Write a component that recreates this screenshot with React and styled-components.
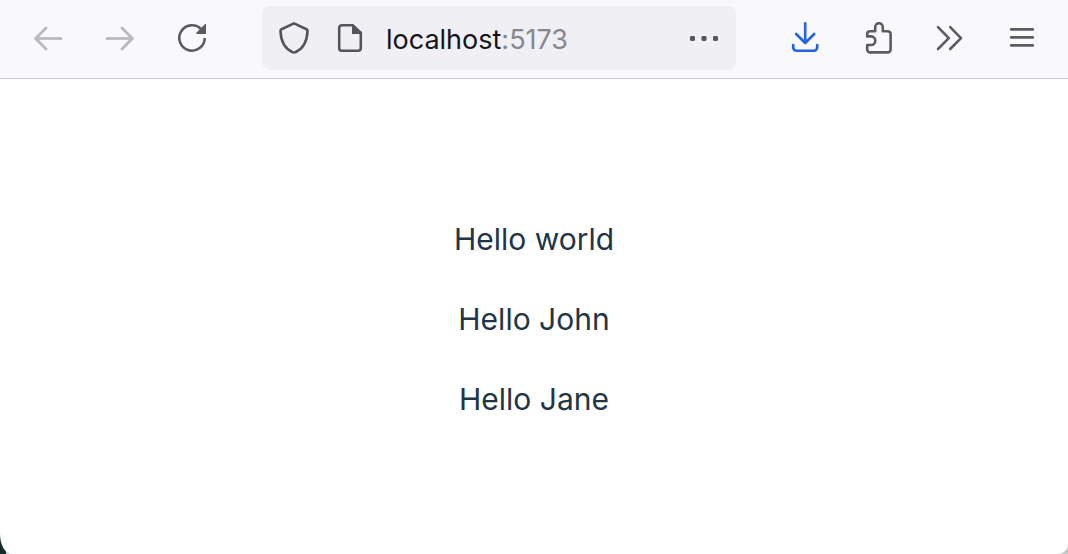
import React from "react";
import styled, { createGlobalStyle } from "styled-components";

const GlobalStyle = createGlobalStyle`
  * { box-sizing: border-box; }
  body {
    margin: 0;
    background: linear-gradient(to right, #14292c 6px, #c6c9c9 6px);
    font-family: Inter, "Liberation Sans", sans-serif;
  }
`;

const BrowserWindow = styled.div`
  display: flex;
  flex-direction: column;
  min-height: 100vh;
  overflow: hidden;
  background: #fff;
  border-radius: 0 0 10px 12px / 0 0 10px 20px;
`;

const Toolbar = styled.header`
  display: flex;
  align-items: center;
  gap: 34px;
  padding: 6px 10px 8px 12px;
  background: #f9f9fb;
  border-bottom: 1px solid #cccccf;
`;

const ButtonGroup = styled.div`
  display: flex;
  flex: none;
`;

const ToolButton = styled.button`
  display: flex;
  align-items: center;
  justify-content: center;
  width: 72px;
  height: 64px;
  padding: 0;
  border: 0;
  background: none;
  color: ${({ $tone }) => $tone || "#5b5b66"};
`;

const AddressBar = styled.div`
  display: flex;
  flex: 1;
  align-items: center;
  min-width: 0;
  height: 64px;
  padding: 0 4px;
  border-radius: 8px;
  background: #f0f0f4;
`;

const AddressButton = styled(ToolButton)`
  flex: none;
  width: 56px;
  color: #55545b;
`;

const Address = styled.div`
  flex: 1;
  min-width: 0;
  padding: 4px 0 0 8px;
  overflow: hidden;
  white-space: nowrap;
  font-size: 27px;
  line-height: 40px;
  color: #15141a;
`;

const Port = styled.span`
  color: #87878c;
`;

const Glyph = styled.svg`
  display: block;
  width: 32px;
  height: 32px;
  fill: none;
  stroke: currentColor;
  stroke-width: ${({ $weight }) => $weight || 2.6};
  stroke-linecap: round;
  stroke-linejoin: round;
`;

const Page = styled.main`
  flex: 1;
  padding: 136px 24px 32px;
`;

const Greeting = styled.p`
  margin: 0 0 32px;
  text-align: center;
  font-size: 30px;
  line-height: 48px;
  color: #213547;
`;

const Icon = ({ weight, children }) => (
  <Glyph viewBox="0 0 32 32" $weight={weight} aria-hidden="true">
    {children}
  </Glyph>
);

const names = ["world", "John", "Jane"];

export default function App() {
  return (
    <>
      <GlobalStyle />
      <BrowserWindow>
        <Toolbar>
          <ButtonGroup>
            <ToolButton $tone="#bababc" aria-label="Back" disabled>
              <Icon weight={2.8}>
                <path strokeLinecap="butt" d="M3.5 16.5H30" />
                <path d="M14 6 3.6 16.5 14 27" />
              </Icon>
            </ToolButton>
            <ToolButton $tone="#bababc" aria-label="Forward" disabled>
              <Icon weight={2.8}>
                <path strokeLinecap="butt" d="M2 16.5H28.5" />
                <path d="M18 6 28.4 16.5 18 27" />
              </Icon>
            </ToolButton>
            <ToolButton aria-label="Reload">
              <Icon>
                <path strokeLinecap="butt" d="M28.7 16A12.7 12.7 0 1 1 25 7" />
                <path stroke="none" fill="currentColor" d="M30 2v10H21q-1.5-.5-.5-1.6l8.3-8.2q.6-.6 1.2-.2z" />
              </Icon>
            </ToolButton>
          </ButtonGroup>

          <AddressBar>
            <AddressButton aria-label="Tracking protection">
              <Icon>
                <path d="M16 1.4 3.5 7.2Q2.4 7.8 2.5 9.2C2.9 18.5 6.4 26.5 14.6 30.2Q16 30.9 17.4 30.2C25.6 26.5 29.1 18.5 29.5 9.2Q29.6 7.8 28.5 7.2Z" />
              </Icon>
            </AddressButton>
            <AddressButton aria-label="Site information">
              <Icon>
                <path d="M18.5 3.2H8a2.8 2.8 0 0 0-2.8 2.8v20a2.8 2.8 0 0 0 2.8 2.8h16a2.8 2.8 0 0 0 2.8-2.8V10.8z" />
                <path stroke="none" fill="currentColor" d="M18 2h1l9 9v1H18z" />
              </Icon>
            </AddressButton>
            <Address>
              localhost<Port>:5173</Port>
            </Address>
            <AddressButton aria-label="Page actions">
              <Icon>
                <g stroke="none" fill="currentColor">
                  <rect x="2" y="14" width="5" height="5" rx="1.4" />
                  <rect x="13.5" y="14" width="5" height="5" rx="1.4" />
                  <rect x="25" y="14" width="5" height="5" rx="1.4" />
                </g>
              </Icon>
            </AddressButton>
          </AddressBar>

          <ButtonGroup>
            <ToolButton $tone="#2463dd" aria-label="Downloads">
              <Icon>
                <path d="M15.2 1.3V21M6.2 12l9 9 9-9M3.2 23v2.4a3.4 3.4 0 0 0 3.4 3.4h17.2a3.4 3.4 0 0 0 3.4-3.4V23" />
              </Icon>
            </ToolButton>
            <ToolButton aria-label="Extensions">
              <Icon>
                <path d="M5.2 14.4V12a2.8 2.8 0 0 1 2.8-2.8h5.2V5a3.8 3.8 0 0 1 7.6 0v4.2h5a2.8 2.8 0 0 1 2.8 2.8v15.6a2.8 2.8 0 0 1-2.8 2.8H8a2.8 2.8 0 0 1-2.8-2.8V23H9a4.3 4.3 0 0 0 0-8.6z" />
              </Icon>
            </ToolButton>
            <ToolButton aria-label="More tools">
              <Icon>
                <path d="M4 5.2 14.8 16.1 4 27M16.2 5.2 27 16.1 16.2 27" />
              </Icon>
            </ToolButton>
            <ToolButton aria-label="Open application menu">
              <Icon>
                <path d="M5.2 7.4h21.6M5.2 15.4h21.6M5.2 23.4h21.6" />
              </Icon>
            </ToolButton>
          </ButtonGroup>
        </Toolbar>

        <Page>
          {names.map((name) => (
            <Greeting key={name}>Hello {name}</Greeting>
          ))}
        </Page>
      </BrowserWindow>
    </>
  );
}
